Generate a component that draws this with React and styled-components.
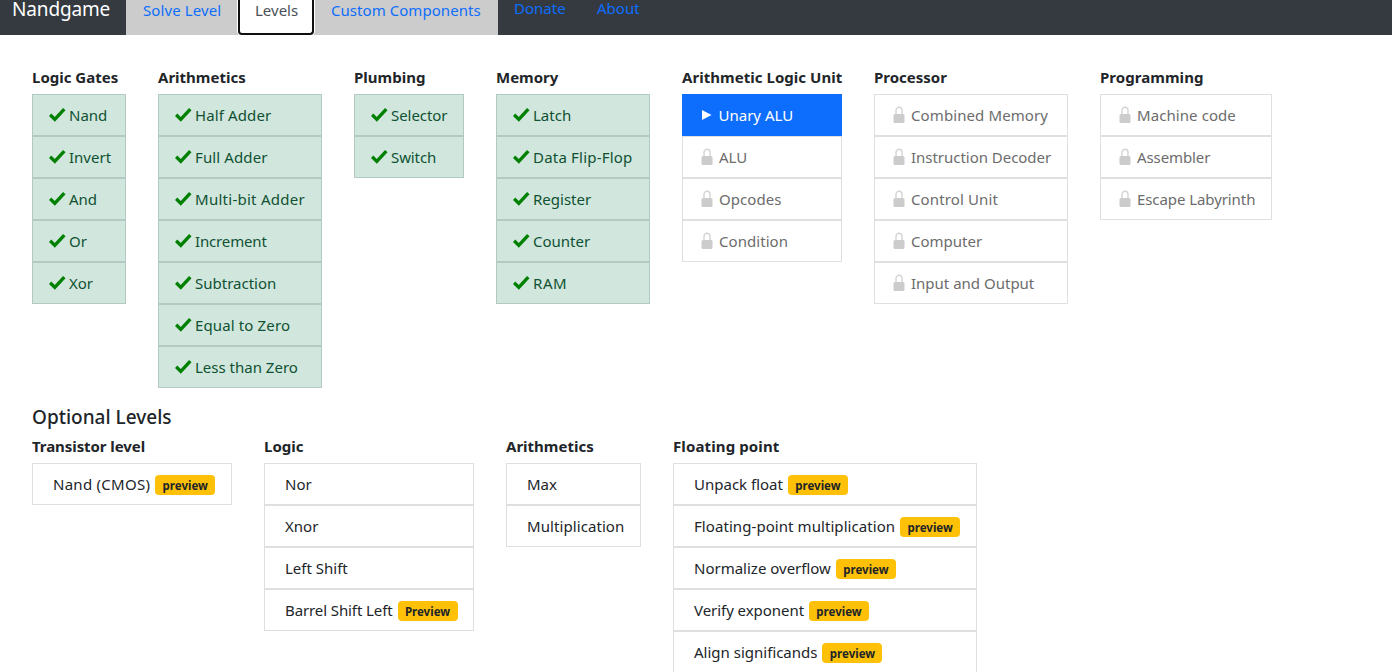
import React from "react";
import styled, { createGlobalStyle, css } from "styled-components";

const GlobalStyle = createGlobalStyle`
  * { box-sizing: border-box; }
  body {
    margin: 0;
    background: #fff;
    color: #212529;
    font: 400 15px/24px "Segoe UI", "Noto Sans", "Open Sans", sans-serif;
    overflow: hidden;
  }
`;

const Page = styled.div`
  height: 672px;
  overflow: hidden;
`;

const Navbar = styled.nav`
  display: flex;
  height: 35px;
  background: #343a40;
`;

const Brand = styled.div`
  width: 126px;
  padding-left: 12px;
  font-size: 19px;
  line-height: 19px;
  letter-spacing: -0.15px;
  color: #fff;
  white-space: nowrap;
`;

const Tabs = styled.div`
  display: flex;
  width: 372px;
  background: #ccc;
`;

const Tab = styled.a`
  width: ${(p) => p.$w}px;
  height: 35px;
  padding-left: 17px;
  line-height: 21px;
  letter-spacing: ${(p) => p.$ls || 0}px;
  color: #0d6efd;
  white-space: nowrap;
  ${(p) =>
    p.$active &&
    css`
      padding-left: 15px;
      color: #495057;
      background: #fff;
      border: 2px solid #101010;
      border-top: 0;
      border-radius: 0 0 4px 4px;
      box-shadow: 0 0 0 1px #fff;
    `}
`;

const NavLink = styled.a`
  margin-left: ${(p) => p.$gap}px;
  width: ${(p) => p.$w}px;
  line-height: 17px;
  color: #0d6efd;
  white-space: nowrap;
`;

const Content = styled.main`
  padding: 30px 32px 0;
`;

const Groups = styled.section`
  display: flex;
  align-items: flex-start;
  gap: 32px;
`;

const Group = styled.div`
  width: ${(p) => p.$w}px;
  flex: none;
`;

const GroupTitle = styled.h3`
  margin: 0;
  height: 29px;
  font-size: 15px;
  font-weight: 700;
  line-height: 24px;
  letter-spacing: ${(p) => p.$ls || 0}px;
  white-space: nowrap;
`;

const SectionTitle = styled.h2`
  margin: 14px 0 0;
  height: 32px;
  font-size: 19px;
  font-weight: 500;
  line-height: 30px;
  white-space: nowrap;
`;

const tones = {
  done: css`
    color: #0f5132;
    background: #d1e7dd;
    border-color: #b4c9c1;
  `,
  active: css`
    color: #fff;
    background: #0d6efd;
    border-color: #0d6efd;
  `,
  locked: css`
    color: #6c6c6c;
    border-color: #dfdfdf;
  `,
  open: css`
    color: #212529;
    border-color: #dfdfdf;
  `,
};

const Row = styled.a`
  display: flex;
  align-items: center;
  height: 42px;
  padding-left: 16px;
  border: 1px solid;
  white-space: nowrap;
  ${(p) => tones[p.$tone]}
`;

const IconSlot = styled.span`
  display: flex;
  width: ${(p) => ({ done: 20, active: 19.5, locked: 20, open: 4 })[p.$tone]}px;
  flex: none;
`;

const Label = styled.span`
  letter-spacing: ${(p) => p.$ls || 0}px;
`;

const Badge = styled.span`
  width: 60px;
  height: 20px;
  margin: 2px 0 0 5px;
  padding-top: 1px;
  border-radius: 4px;
  background: #ffc107;
  color: #212529;
  font-size: 11.5px;
  font-weight: 700;
  line-height: 20px;
  text-align: center;
`;

const Check = () => (
  <svg width="17" height="16" viewBox="0 0 17 16">
    <path d="M1.1 7.8 5.8 12.4 15.3 2.2" fill="none" stroke="#008000" strokeWidth="3.4" />
  </svg>
);

const Play = () => (
  <svg width="16" height="16" viewBox="0 0 16 16">
    <path d="M3 3 12.5 8 3 13Z" fill="#fff" />
  </svg>
);

const Lock = () => (
  <svg width="16" height="18" viewBox="0 0 16 18">
    <path d="M5 9V4.3a3 3 0 0 1 6 0V9" fill="none" stroke="#d4d4d4" strokeWidth="1.4" />
    <rect x="2.5" y="8" width="11" height="9" rx="1.5" fill="#ccc" />
  </svg>
);

const icons = { done: Check, active: Play, locked: Lock };

const mainGroups = [
  { title: "Logic Gates", w: 94, tone: "done", items: ["Nand", "Invert", "And", "Or", "Xor"] },
  {
    title: "Arithmetics", w: 164, tone: "done",
    items: [
      { name: "Half Adder", ls: 0.12 },
      { name: "Full Adder", ls: 0.12 },
      { name: "Multi-bit Adder", ls: 0.27 },
      { name: "Increment", ls: -0.15 },
      "Subtraction",
      { name: "Equal to Zero", ls: 0.13 },
      "Less than Zero",
    ],
  },
  { title: "Plumbing", w: 110, tone: "done", items: [{ name: "Selector", ls: -0.05 }, { name: "Switch", ls: -0.1 }] },
  {
    title: "Memory", w: 154, tone: "done",
    items: ["Latch", { name: "Data Flip-Flop", ls: 0.2 }, "Register", "Counter", { name: "RAM", ls: 0.6 }],
  },
  {
    title: "Arithmetic Logic Unit", w: 160, tone: "locked", ls: 0.04,
    items: [{ name: "Unary ALU", tone: "active" }, "ALU", { name: "Opcodes", ls: 0.05 }, { name: "Condition", ls: 0.05 }],
  },
  {
    title: "Processor", w: 194, tone: "locked",
    items: [
      { name: "Combined Memory", ls: 0.1 },
      { name: "Instruction Decoder", ls: -0.03 },
      { name: "Control Unit", ls: 0.12 },
      "Computer",
      "Input and Output",
    ],
  },
  {
    title: "Programming", w: 172, tone: "locked", ls: 0.05,
    items: [{ name: "Machine code", ls: 0.08 }, { name: "Assembler", ls: -0.1 }, { name: "Escape Labyrinth", ls: -0.08 }],
  },
];

const optionalGroups = [
  {
    title: "Transistor level", w: 200, tone: "open", ls: -0.07,
    items: [{ name: "Nand (CMOS)", ls: 0.27, badge: "preview" }],
  },
  {
    title: "Logic", w: 210, tone: "open",
    items: ["Nor", "Xnor", "Left Shift", { name: "Barrel Shift Left", ls: -0.1, badge: "Preview" }],
  },
  { title: "Arithmetics", w: 135, tone: "open", items: ["Max", { name: "Multiplication", ls: 0.08 }] },
  {
    title: "Floating point", w: 304, tone: "open", ls: 0.12,
    items: [
      { name: "Unpack float", badge: "preview" },
      { name: "Floating-point multiplication", ls: 0.07, badge: "preview" },
      { name: "Normalize overflow", badge: "preview" },
      { name: "Verify exponent", ls: -0.05, badge: "preview" },
      { name: "Align significands", badge: "preview" },
    ],
  },
];

function LevelGroup({ title, w, tone, ls, items }) {
  return (
    <Group $w={w}>
      <GroupTitle $ls={ls}>{title}</GroupTitle>
      {items.map((entry) => {
        const item = typeof entry === "string" ? { name: entry } : entry;
        const t = item.tone || tone;
        const Icon = icons[t];
        return (
          <Row key={item.name} $tone={t}>
            <IconSlot $tone={t}>{Icon && <Icon />}</IconSlot>
            <Label $ls={item.ls}>{item.name}</Label>
            {item.badge && <Badge>{item.badge}</Badge>}
          </Row>
        );
      })}
    </Group>
  );
}

export default function App() {
  return (
    <Page>
      <GlobalStyle />
      <Navbar>
        <Brand>Nandgame</Brand>
        <Tabs>
          <Tab $w={112} $ls={0.1}>Solve Level</Tab>
          <Tab $w={76} $active>Levels</Tab>
          <Tab $w={184} $ls={0.05}>Custom Components</Tab>
        </Tabs>
        <NavLink $gap={16} $w={52}>Donate</NavLink>
        <NavLink $gap={31} $w={44}>About</NavLink>
      </Navbar>
      <Content>
        <Groups>{mainGroups.map((g) => <LevelGroup key={g.title} {...g} />)}</Groups>
        <SectionTitle>Optional Levels</SectionTitle>
        <Groups>{optionalGroups.map((g) => <LevelGroup key={g.title} {...g} />)}</Groups>
      </Content>
    </Page>
  );
}
